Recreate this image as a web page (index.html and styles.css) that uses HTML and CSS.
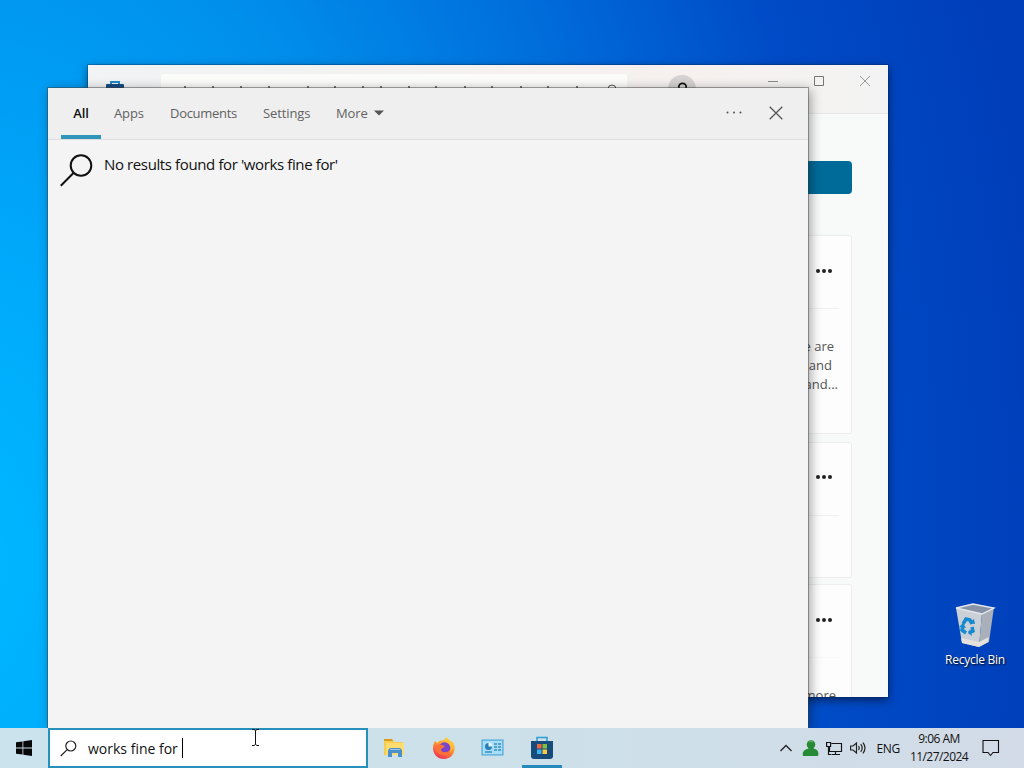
FILE: index.html
```html
<!DOCTYPE html>
<html lang="en">
<head>
    <meta charset="utf-8">
    <title>Desktop</title>
    <link rel="stylesheet" href="styles.css">
</head>
<body>
    <div class="desktop">
        <div class="store-window">
            <div class="store-titlebar">
                <svg class="store-logo" width="18" height="20" viewBox="0 0 18 20">
                    <path d="M5 4V1h8v3" fill="none" stroke="#2388c4" stroke-width="2"/>
                    <rect y="3" width="18" height="17" rx="1" fill="#164b84"/>
                </svg>
                <div class="store-search">
                    <svg class="store-query" width="400" height="20" viewBox="0 0 400 20">
                        <path d="M1 2v10M29 2v10M57 2v10M85 2v10M124 2v10M151 2v10M179 2v10M197 2v10M225 2v10M252 2v10M281 2v10M308 2v10M337 2v10M364 2v10M393 2v10" stroke="#333" stroke-width="1.3"/>
                    </svg>
                    <svg width="12" height="14" viewBox="0 0 12 14">
                        <circle cx="6" cy="5" r="4" fill="none" stroke="#555"/>
                    </svg>
                </div>
                <div class="avatar">
                    <svg width="28" height="28" viewBox="0 0 28 28">
                        <circle cx="14.500" cy="12" r="3.700" fill="none" stroke="#111" stroke-width="1.8"/>
                    </svg>
                </div>
                <div class="store-controls">
                    <svg width="12" height="12" viewBox="0 0 12 12"><path d="M1 6.5h10" stroke="#888"/></svg>
                    <svg width="12" height="12" viewBox="0 0 12 12"><path d="M1.500 1.500h9v9h-9z" fill="none" stroke="#777"/></svg>
                    <svg width="12" height="12" viewBox="0 0 12 12"><path d="M1 1l10 10M11 1L1 11" stroke="#999"/></svg>
                </div>
            </div>
            <div class="store-content">
                <div class="store-button"></div>
                <div class="card card-tall">
                    <div class="card-head"><i></i><i></i><i></i></div>
                    <div class="card-text">
                        <span class="line-one">e are</span>
                        <span class="line-two">and</span>
                        <span>and...</span>
                    </div>
                </div>
                <div class="card card-short">
                    <div class="card-head"><i></i><i></i><i></i></div>
                </div>
                <div class="card card-last">
                    <div class="card-head"><i></i><i></i><i></i></div>
                    <div class="card-text"><span class="line-more">more</span></div>
                </div>
            </div>
        </div>

        <div class="recycle-bin">
            <svg width="42" height="46" viewBox="0 0 42 46">
                <path d="M2 6l26 5-3 34-17-4z" fill="#cbd0d6"/>
                <path d="M28 11l12-6-5 35-10 5z" fill="#a9b0ba"/>
                <path d="M2 6l17-4 21 4-12 6z" fill="#8993a7" stroke="#e4e8ec" stroke-width="1.3"/>
                <path d="M7 36l18 4 10-5-1 5-9 5-17-4z" fill="#e5e2de"/>
                <path d="M9 22l3-5 4 1 2 4" fill="none" stroke="#1689cf" stroke-width="3.500"/>
                <path d="M18 25l1 4-4 2M9 24l-1 4 4 3" fill="none" stroke="#1689cf" stroke-width="3.500"/>
                <path d="M15 21l6 1-1-5zM16 27l-2 4 4 3zM5 25l4-4 3 5z" fill="#1689cf"/>
            </svg>
            <span>Recycle Bin</span>
        </div>

        <div class="search-panel">
            <div class="tabs">
                <div class="tab active"><span class="tab-all">All</span></div>
                <div class="tab tab-apps">Apps</div>
                <div class="tab tab-documents">Documents</div>
                <div class="tab tab-settings">Settings</div>
                <div class="tab tab-more">More
                    <svg width="10" height="6" viewBox="0 0 10 6"><path d="M0 .5h10l-5 5z" fill="#555"/></svg>
                </div>
                <div class="panel-actions">
                    <svg width="18" height="14" viewBox="0 0 18 14" fill="#555"><circle cx="2.500" cy="6.500" r="1"/><circle cx="9" cy="6.500" r="1"/><circle cx="15.500" cy="6.500" r="1"/></svg>
                    <svg width="14" height="14" viewBox="0 0 14 14"><path d="M.7.7l12.600 12.600M13.300.7L.7 13.300" stroke="#555" stroke-width="1.300"/></svg>
                </div>
            </div>
            <div class="no-results">
                <svg width="33" height="34" viewBox="0 0 33 34" fill="none" stroke="#111" stroke-width="2">
                    <circle cx="21" cy="12.500" r="10.300"/>
                    <path d="M13.700 19.800L.8 32.700"/>
                </svg>
                <span>No results found for 'works fine for'</span>
            </div>
        </div>

        <div class="taskbar">
            <div class="start">
                <svg width="16" height="16" viewBox="0 0 16 16" fill="#080808">
                    <path d="M0 2.300l6.500-.9v6.200H0zM7.300 1.300L16 0v7.600H7.300zM0 8.400h6.500v6.200L0 13.700zM7.300 8.400H16V16l-8.700-1.300z"/>
                </svg>
            </div>
            <div class="search-box">
                <svg width="17" height="17" viewBox="0 0 17 17" fill="none" stroke="#222" stroke-width="1.200">
                    <circle cx="10.800" cy="6" r="5"/>
                    <path d="M7.200 9.600L.7 16"/>
                </svg>
                <span class="query">works fine for</span>
                <span class="caret"></span>
            </div>
            <div class="task-icons">
                <div class="task">
                    <svg width="22" height="22" viewBox="0 0 22 22">
                        <path d="M0 2h8l2 3h9v13H0z" fill="#f6cd50"/>
                        <path d="M0 2h8l1 2H0z" fill="#d99b1b"/>
                        <path d="M2 6h18v12H2z" fill="#ffdc70"/>
                        <path d="M4 20v-7l2-2h10l2 2v7h-4v-4H8v4z" fill="#4b8fcc"/>
                        <path d="M6 12h10v1H6z" fill="#a1c7e5"/>
                    </svg>
                </div>
                <div class="task">
                    <svg width="24" height="24" viewBox="0 0 24 24">
                        <defs>
                            <linearGradient id="fox" x1=".8" y1="0" x2=".3" y2="1">
                                <stop offset="0" stop-color="#ffe24a"/>
                                <stop offset=".45" stop-color="#ff9a2a"/>
                                <stop offset="1" stop-color="#f02f58"/>
                            </linearGradient>
                        </defs>
                        <path d="M3 5l2 2c2-2 4-3 7-3l2-3c3 2 4 4 5 5l1-1c3 4 3 8 2 11-2 5-6 7-10 7C5 23 1 18 1 12c0-3 1-5 2-7z" fill="url(#fox)"/>
                        <circle cx="12.500" cy="12" r="5.800" fill="#7944ce"/>
                        <path d="M4 9c4-2 6 0 9 1-1 2-4 2-4 4 1 3 6 3 9 0-1 5-5 6-8 5-5-1-7-5-6-10z" fill="#fc7135"/>
                        <path d="M14 2c1 4 5 5 5 10 0 3-1 4-2 5 6-4 5-11-3-15z" fill="#ffc437"/>
                    </svg>
                </div>
                <div class="task">
                    <svg width="24" height="20" viewBox="0 0 24 20">
                        <rect x="1" y="2" width="21" height="15" fill="#83cdf2" stroke="#4ba4d5"/>
                        <path d="M2 3h19v13H2z" fill="#a8def6"/>
                        <circle cx="7.500" cy="8.500" r="3.500" fill="#277fb9"/>
                        <path d="M7.500 8.500V4.500a4 4 0 0 1 4 4z" fill="#e5f7ff"/>
                        <path d="M13 6h3M17 6h3M13 9h3M17 9h3M13 12h3M17 12h3M4 14h7" stroke="#348ebe" stroke-width="1.500"/>
                    </svg>
                </div>
                <div class="task open">
                    <svg width="24" height="24" viewBox="0 0 24 24">
                        <path d="M7 5V1.500h10V5" fill="none" stroke="#2b9bd3" stroke-width="1.500"/>
                        <path d="M1 5h22v15q0 3-3 3H4q-3 0-3-3z" fill="#174b7c"/>
                        <path d="M7 8h4.500v4.500H7z" fill="#ee653f"/>
                        <path d="M12.500 8H17v4.500h-4.500z" fill="#83bc3f"/>
                        <path d="M7 13.500h4.500V18H7z" fill="#37b4ee"/>
                        <path d="M12.500 13.500H17V18h-4.500z" fill="#ffc83a"/>
                    </svg>
                </div>
            </div>
            <div class="tray">
                <svg width="14" height="8" viewBox="0 0 14 8" fill="none" stroke="#222" stroke-width="1.300"><path d="M1.500 7L7 1.500 12.500 7"/></svg>
                <svg class="person" width="17" height="17" viewBox="0 0 17 17" fill="#278a35"><circle cx="9" cy="4.500" r="4.300"/><path d="M1 16c-1-4 1-6 4-7l2-1h4l2 1c3 1 4 4 3 7z"/><path d="M7 2q2-1 4 0" stroke="#66b469" fill="none"/></svg>
                <svg class="network" width="17" height="15" viewBox="0 0 17 15" fill="none" stroke="#151515" stroke-width="1.200"><path d="M5.500 2.500h10v8h-12V6M9.500 10.500v3M6 13.500h8M.6 1.500h4v4h-4zM2.500 5.500v8h3"/></svg>
                <svg class="volume" width="16" height="14" viewBox="0 0 16 14" fill="none" stroke="#222" stroke-width="1.200"><path d="M.6 5H3L6.500 2v10L3 9H.6zM8.500 5q1.500 2 0 4M10.700 3.200q3 3.800 0 7.600M13 1.700q4 5.300 0 10.600"/></svg>
                <span class="language">ENG</span>
                <div class="clock"><span class="time">9:06 AM</span><span>11/27/2024</span></div>
                <svg class="notification" width="18" height="18" viewBox="0 0 18 18" fill="none" stroke="#111" stroke-width="1.100"><path d="M1 1.500h15.500v12H11l-2.500 3-2.500-3H1z"/></svg>
            </div>
        </div>

        <svg class="cursor" width="9" height="17" viewBox="0 0 9 17" fill="none" stroke="#111"><path d="M1 .5h2l1.500 1L6 .5h2M4.500 1.500v14M1 16.500h2l1.500-1 1.500 1h2"/></svg>
    </div>
</body>
</html>
```

FILE: styles.css
```css
body {
    margin: 0;
    overflow: hidden;
    font-family: "Open Sans", "Noto Sans", sans-serif;
    color: #111;
}

svg {
    display: block;
    flex-shrink: 0;
}

.desktop {
    position: relative;
    width: 1024px;
    height: 768px;
    overflow: hidden;
    background: radial-gradient(ellipse 1100px 1700px at -40px 560px, #00b9ff 0%, #00a9fb 18%, #0090ec 40%, #006ddb 61%, #004bc7 80%, #003db8 100%);
}

.store-window {
    position: absolute;
    left: 88px;
    top: 65px;
    width: 800px;
    height: 632px;
    overflow: hidden;
    background-color: #f8f9f9;
    box-shadow: 0 0 0 1px rgba(0, 35, 85, 0.3), 0 3px 9px rgba(0, 0, 0, 0.55);
}

.store-titlebar {
    display: flex;
    height: 48px;
    background: linear-gradient(90deg, #f1f3f4, #f6f1ef 75%, #f3f3f3);
    border-bottom: 1px solid #e6e6e6;
}

.store-logo {
    margin: 16px 0 0 18px;
}

.store-search {
    display: flex;
    width: 466px;
    height: 32px;
    box-sizing: border-box;
    margin: 9px 0 0 37px;
    padding: 10px 9px 0 23px;
    justify-content: space-between;
    background-color: #fcfcfb;
    border-radius: 3px;
}

.avatar {
    width: 28px;
    height: 28px;
    margin: 10px 0 0 41px;
    border-radius: 50%;
    background-color: #d5d2d1;
}

.store-controls {
    display: flex;
    gap: 34px;
    margin: 10px 0 0 71px;
}

.store-content {
    padding: 47px 36px 0;
}

.store-button {
    height: 33px;
    margin-bottom: 41px;
    border-radius: 4px;
    background-color: #006b99;
}

.card {
    box-sizing: border-box;
    border: 1px solid #ededed;
    border-radius: 3px;
    background-color: #fdfdfd;
}

.card-tall {
    height: 199px;
    margin-bottom: 8px;
}

.card-short {
    height: 136px;
    margin-bottom: 6px;
}

.card-last {
    height: 160px;
}

.card-head {
    box-sizing: border-box;
    display: flex;
    height: 73px;
    margin-right: 12px;
    padding: 0 7px 3px 0;
    align-items: center;
    justify-content: flex-end;
    gap: 2px;
    border-bottom: 1px solid #f0f0f0;
}

.card-head i {
    width: 4px;
    height: 4px;
    border-radius: 50%;
    background-color: #222;
}

.card-short .card-head {
    padding-bottom: 5px;
}

.card-text {
    display: flex;
    flex-direction: column;
    align-items: flex-end;
    padding: 28px 13px 0 0;
    font-size: 13px;
    line-height: 19px;
    color: #555;
}

.card-text .line-one {
    margin-right: 4px;
}

.card-text .line-two {
    margin-right: 6px;
}

.card-text .line-more {
    margin-right: 2px;
}

.card-last .card-head {
    border-bottom-color: #f8f8f8;
}

.recycle-bin {
    position: absolute;
    left: 936px;
    top: 602px;
    display: flex;
    width: 78px;
    flex-direction: column;
    align-items: center;
    color: white;
    font-size: 12px;
    line-height: 18px;
    letter-spacing: -0.25px;
    text-shadow: 1px 1px 2px #000;
}

.recycle-bin span {
    margin-top: 3px;
    white-space: nowrap;
}

.search-panel {
    position: absolute;
    left: 48px;
    top: 88px;
    width: 760px;
    height: 640px;
    background-color: #f4f4f4;
    box-shadow: 0 0 0 1px rgba(60, 60, 60, 0.45), 2px 2px 11px rgba(0, 0, 0, 0.4);
}

.tabs {
    display: flex;
    height: 51px;
    padding-left: 13px;
    background-color: #efefef;
    border-bottom: 1px solid #dedede;
    font-size: 13px;
    color: #626262;
}

.tab {
    box-sizing: border-box;
    height: 51px;
    line-height: 50px;
    letter-spacing: -0.1px;
    white-space: nowrap;
}

.tab.active {
    width: 40px;
    border-bottom: 4px solid #2f95bb;
    color: #111;
    font-weight: 600;
    text-align: center;
}

.tab-apps {
    width: 56px;
    padding-left: 13px;
}

.tab-documents {
    width: 92px;
    padding-left: 13px;
    letter-spacing: -0.3px;
}

.tab-settings {
    width: 74px;
    padding-left: 14px;
}

.tab-more {
    display: flex;
    height: 50px;
    align-items: center;
    gap: 6px;
    padding-left: 13px;
}

.panel-actions {
    display: flex;
    gap: 26px;
    height: 50px;
    align-items: center;
    margin-left: auto;
    padding-right: 25px;
}

.no-results {
    display: flex;
    gap: 11px;
    padding: 13px 0 0 12px;
    font-size: 15px;
    line-height: 23px;
    letter-spacing: -0.38px;
}

.taskbar {
    position: absolute;
    left: 0;
    top: 728px;
    display: flex;
    width: 1024px;
    height: 40px;
    background: linear-gradient(90deg, #cae3ed, #cde0e9 55%, #d2dbe7);
}

.start {
    display: flex;
    width: 48px;
    align-items: center;
    justify-content: center;
}

.search-box {
    box-sizing: border-box;
    display: flex;
    width: 320px;
    align-items: center;
    padding-left: 10px;
    border: 2px solid #268fbc;
    background-color: white;
}

.query {
    margin-left: 11px;
    font-size: 14px;
}

.caret {
    width: 1px;
    height: 20px;
    margin-left: 4px;
    background-color: #000;
}

.task-icons {
    display: flex;
    margin-left: 2px;
}

.task {
    box-sizing: border-box;
    display: flex;
    width: 49px;
    height: 40px;
    align-items: center;
    justify-content: center;
    border-bottom: 3px solid transparent;
    padding-top: 3px;
}

.task.open {
    width: 40px;
    margin-left: 5px;
    border-bottom-color: #258abb;
}

.tray {
    display: flex;
    align-items: center;
    margin-left: auto;
    padding-right: 24px;
    font-size: 12px;
}

.person {
    margin-left: 9px;
}

.network {
    margin-left: 7px;
}

.volume {
    margin-left: 7px;
}

.language {
    margin-left: 10px;
    letter-spacing: -0.3px;
}

.clock {
    display: flex;
    width: 60px;
    flex-direction: column;
    align-items: center;
    margin-left: 9px;
    line-height: 18px;
    letter-spacing: -0.55px;
}

.notification {
    margin-left: 13px;
}

.cursor {
    position: absolute;
    left: 251px;
    top: 729px;
}
```
